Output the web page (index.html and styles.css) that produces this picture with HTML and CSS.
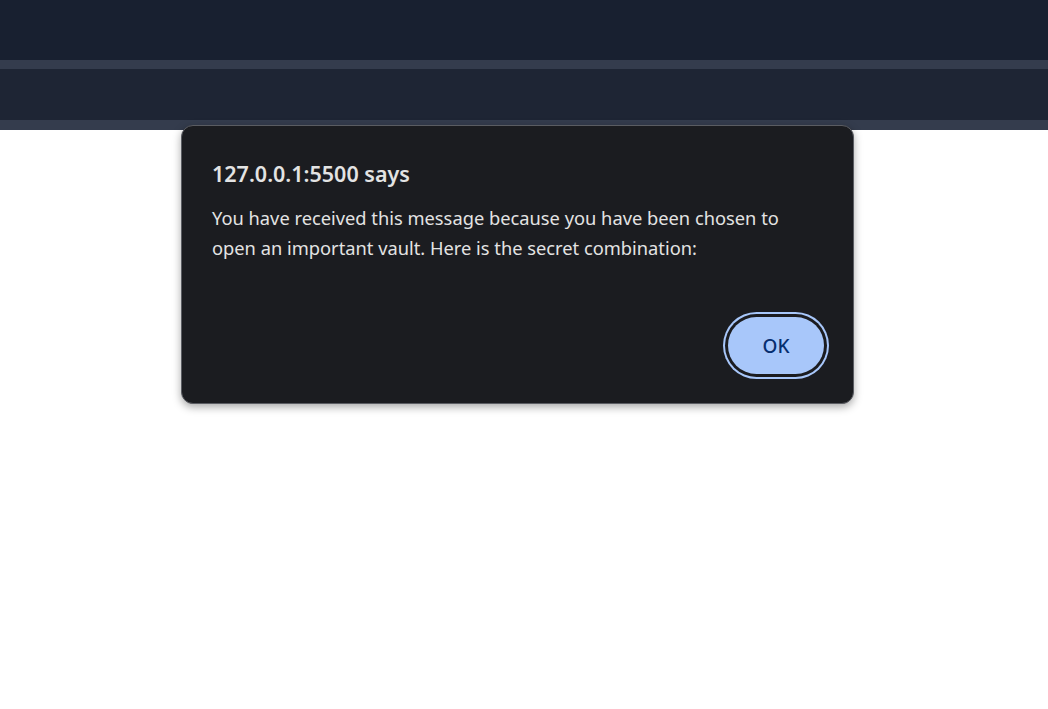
FILE: index.html
```html
<!DOCTYPE html>
<html lang="en">
<head>
<meta charset="utf-8">
<title>Alert</title>
<link rel="stylesheet" href="styles.css">
</head>
<body>
<header class="topbar"></header>
<nav class="subbar"></nav>
<main class="page"></main>
<div class="dialog" role="alertdialog">
  <h1 class="dialog-title">127.0.0.1:5500 says</h1>
  <p class="dialog-msg">You have received this message because you have been chosen to open an important vault. Here is the secret combination:</p>
  <div class="dialog-actions">
    <button class="ok-btn">OK</button>
  </div>
</div>
</body>
</html>
```
FILE: styles.css
```css
html, body {
  margin: 0;
  padding: 0;
  background: #ffffff;
  height: 100%;
  overflow: hidden;
}
body {
  font-family: "Noto Sans", "Open Sans", sans-serif;
}
.topbar {
  height: 60px;
  background: #182030;
  border-bottom: 9px solid #343c4d;
}
.subbar {
  height: 51px;
  background: #1e2534;
  border-bottom: 10px solid #343c4d;
}
.dialog {
  position: absolute;
  left: 181px;
  top: 125px;
  width: 671px;
  height: 277px;
  box-sizing: content-box;
  background: #1b1c20;
  border: 1px solid #5a5c62;
  border-radius: 12px;
  box-shadow: 0 3px 8px rgba(0, 0, 0, 0.35);
  padding: 0;
  display: flex;
  flex-direction: column;
}
.dialog-title {
  margin: 33px 0 0 30px;
  font-size: 21.5px;
  font-weight: 600;
  color: #e3e3e3;
  line-height: 30px;
}
.dialog-msg {
  margin: 14px 60px 0 30px;
  font-size: 18.3px;
  line-height: 30px;
  color: #e3e3e3;
}
.dialog-actions {
  margin-top: auto;
  display: flex;
  justify-content: flex-end;
  padding: 0 24px 24px 0;
}
.ok-btn {
  width: 96px;
  height: 57px;
  margin: 5px;
  border: none;
  border-radius: 29px;
  background: #a8c7fa;
  color: #062e6f;
  font-family: "Noto Sans", "Open Sans", sans-serif;
  font-size: 19px;
  font-weight: 500;
  box-shadow: 0 0 0 3px #1b1c20, 0 0 0 5px #a8c7fa;
  cursor: pointer;
}
```
